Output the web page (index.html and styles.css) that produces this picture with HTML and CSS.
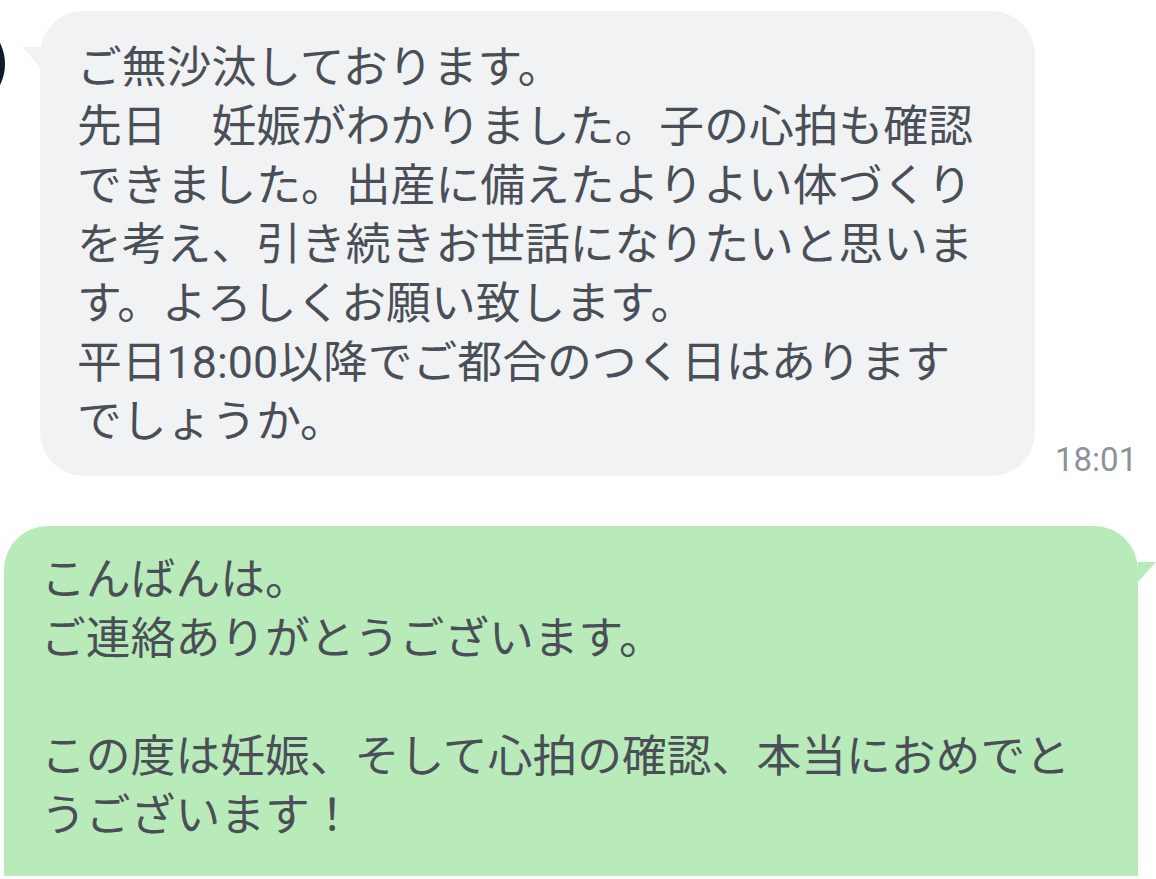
FILE: index.html
```html
<!DOCTYPE html>
<html lang="ja">
<head>
<meta charset="utf-8">
<link rel="stylesheet" href="styles.css">
</head>
<body>
<div class="chat">
  <div class="row in">
    <div class="avatar"></div>
    <div class="bubble gray">
      <svg class="tail tail-left" width="18" height="20" viewBox="0 0 18 20"><polygon points="0,0 18,0 18,20" fill="#f1f2f4"/></svg>
      <p class="msg">ご無沙汰しております。<br>先日　妊娠がわかりました。子の心拍も確認できました。出産に備えたよりよい体づくりを考え、引き続きお世話になりたいと思います。よろしくお願い致します。<br>平日18:00以降でご都合のつく日はありますでしょうか。</p>
    </div>
    <div class="time">18:01</div>
  </div>
  <div class="row out">
    <div class="bubble green">
      <svg class="tail tail-right" width="18" height="20" viewBox="0 0 18 20"><polygon points="0,0 18,0 0,20" fill="#b9eab9"/></svg>
      <p class="msg">こんばんは。<br>ご連絡ありがとうございます。<br><br>この度は妊娠、そして心拍の確認、本当におめでとうございます！</p>
    </div>
  </div>
</div>
</body>
</html>
```

FILE: styles.css
```css
html, body {
  margin: 0;
  padding: 0;
  background: #ffffff;
  overflow: hidden;
}
.chat {
  display: flex;
  flex-direction: column;
  gap: 50px;
  padding-top: 11px;
  font-family: Roboto, "Noto Sans CJK JP", sans-serif;
  color: #4a4f57;
}
.row {
  display: flex;
  align-items: flex-start;
}
.row.in {
  align-items: flex-end;
}
.avatar {
  align-self: flex-start;
  width: 94px;
  height: 94px;
  border-radius: 50%;
  background: #0f1a2e;
  margin-left: -89px;
  margin-top: 6px;
  margin-right: 35px;
  flex: none;
}
.bubble {
  position: relative;
  flex: none;
  box-sizing: border-box;
}
.msg {
  margin: 0;
  font-size: 44.8px;
  line-height: 59px;
  letter-spacing: 0;
}
.gray {
  width: 995px;
  background: #f1f2f4;
  border-radius: 44px;
  padding: 27px 40px 25px 37px;
}
.green {
  width: 1134px;
  margin-left: 4px;
  background: #b9eab9;
  border-radius: 44px 44px 0 0;
  padding: 24px 50px 31px 37px;
}
.tail {
  position: absolute;
  display: block;
}
.tail-left {
  left: -18px;
  top: 36px;
}
.tail-right {
  right: -18px;
  top: 36px;
}
.time {
  margin-left: 20px;
  font-size: 33px;
  line-height: 33px;
  color: #8a939c;
  padding-bottom: 0;
}
```
